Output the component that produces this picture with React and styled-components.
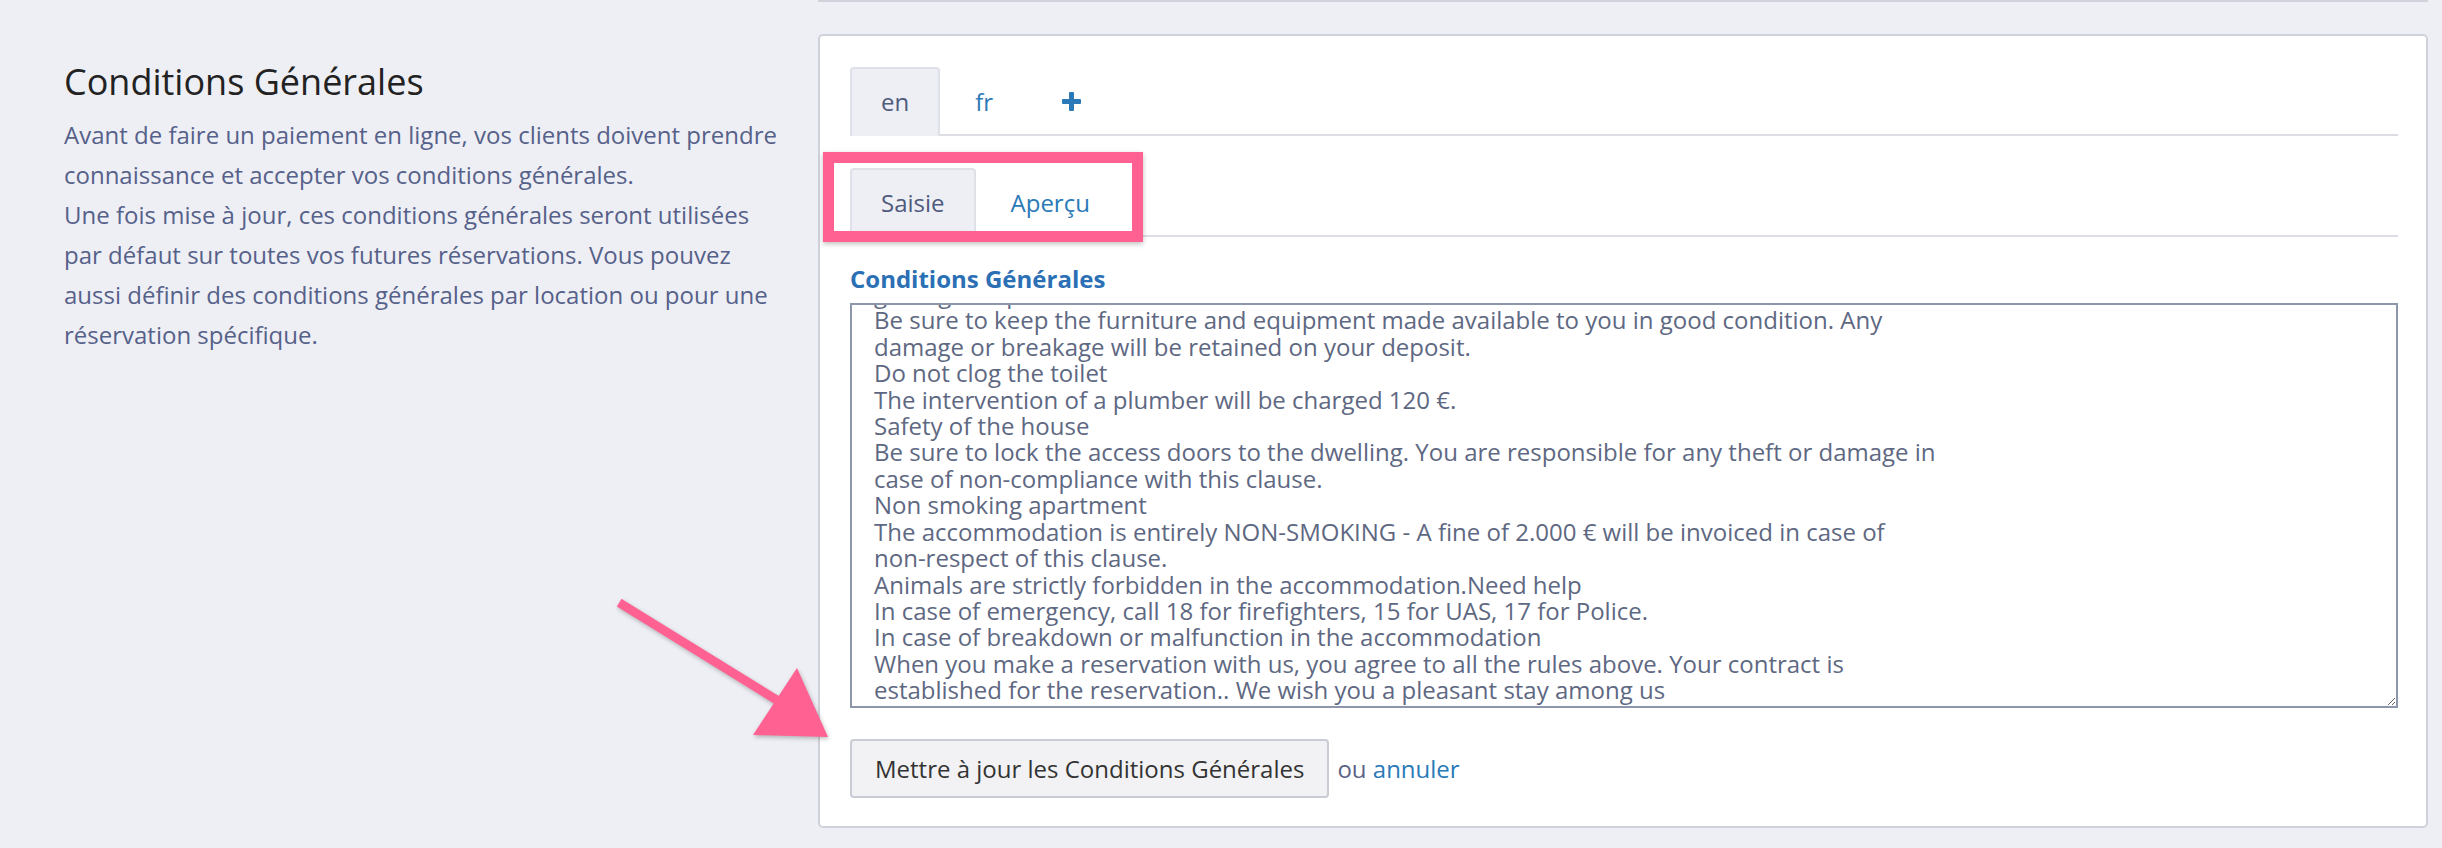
import React, { useEffect, useRef } from 'react';
import styled, { createGlobalStyle } from 'styled-components';

const GlobalStyle = createGlobalStyle`
  html, body {
    margin: 0;
    padding: 0;
    background: #eeeff4;
    font-family: "Open Sans", "Liberation Sans", sans-serif;
  }
`;

const Page = styled.div`
  position: relative;
  min-height: 848px;
  overflow: hidden;
`;

const PrevCard = styled.div`
  margin-left: 818px;
  width: 1610px;
  height: 0;
  box-sizing: border-box;
  border: 2px solid #cfd2da;
  border-top: none;
  border-radius: 0 0 5px 5px;
`;

const Row = styled.div`
  display: grid;
  grid-template-columns: 754px 1610px;
  padding-left: 64px;
  margin-top: 32px;
`;

const Intro = styled.div`
  padding-top: 26px;
`;

const Heading = styled.h2`
  margin: 0;
  font-size: 36px;
  line-height: 43px;
  font-weight: 400;
  color: #222;
`;

const Lead = styled.p`
  margin: 12px 0 0;
  width: 720px;
  font-size: 24px;
  line-height: 40px;
  color: #56618a;
`;

const Card = styled.div`
  position: relative;
  box-sizing: border-box;
  height: 794px;
  background: #fff;
  border: 2px solid #cfd2da;
  border-radius: 5px;
  padding: 31px 28px 0 30px;
`;

const TabBar = styled.div`
  display: flex;
  height: 67px;
  border-bottom: 2px solid #dcdee3;
  margin-top: ${(p) => p.$gap || 0}px;
`;

const Tab = styled.div`
  display: flex;
  align-items: center;
  justify-content: center;
  box-sizing: border-box;
  padding: 0 ${(p) => p.$pad || 29}px 3px;
  margin-right: 4px;
  margin-bottom: -2px;
  font-size: 24px;
  color: ${(p) => (p.$active ? '#4f5a7d' : '#2a7ab8')};
  background: ${(p) => (p.$active ? '#eeeff4' : 'transparent')};
  border: 2px solid ${(p) => (p.$active ? '#dfe1e8' : 'transparent')};
  border-bottom: none;
  border-radius: 4px 4px 0 0;
`;

const Highlight = styled.div`
  position: absolute;
  left: 3px;
  top: 116px;
  width: 320px;
  height: 90px;
  box-sizing: border-box;
  border: 11px solid #ff6192;
  box-shadow: 0 2px 5px rgba(0, 0, 0, 0.25);
  pointer-events: none;
`;

const Label = styled.label`
  display: block;
  margin-top: 29px;
  font-size: 24px;
  line-height: 26px;
  font-weight: 700;
  color: #2b70b5;
`;

const Editor = styled.textarea`
  display: block;
  margin-top: 11px;
  width: 100%;
  height: 405px;
  box-sizing: border-box;
  padding: 6px 20px 1px 22px;
  border: 2px solid #8d96aa;
  border-radius: 0;
  font-family: "Open Sans", "Liberation Sans", sans-serif;
  font-size: 24px;
  line-height: 26.4px;
  color: #5e6882;
  background: #fff;
  overflow: hidden;
  outline: none;
`;

const Actions = styled.div`
  display: flex;
  align-items: center;
  gap: 8px;
  margin-top: 31px;
  font-size: 24px;
  color: #5a6385;
`;

const Button = styled.button`
  height: 59px;
  padding: 0 23px;
  font-family: "Open Sans", "Liberation Sans", sans-serif;
  font-size: 24px;
  color: #333;
  background: #f2f2f4;
  border: 2px solid #c9ccd4;
  border-radius: 4px;
`;

const Link = styled.a`
  color: #2a7ab8;
  text-decoration: none;
`;

const Arrow = styled.svg`
  position: absolute;
  left: 600px;
  top: 590px;
  filter: drop-shadow(1px 2px 2px rgba(0, 0, 0, 0.25));
`;

const PlusIcon = () => (
  <svg width="19" height="19" viewBox="0 0 19 19">
    <rect x="7" y="0" width="5" height="19" rx="1" fill="#2a7ab8" />
    <rect x="0" y="7" width="19" height="5" rx="1" fill="#2a7ab8" />
  </svg>
);

const terms = `House rules
Arrival and departure
Arrival is from 4 pm and departure before 11 am. Please let us know your arrival time.
Respect for the neighborhood
Please respect the tranquility of the neighbors, especially between 10 pm and 8 am. Do not leave
garbage on public roads.
Be sure to keep the furniture and equipment made available to you in good condition. Any
damage or breakage will be retained on your deposit.
Do not clog the toilet
The intervention of a plumber will be charged 120 €.
Safety of the house
Be sure to lock the access doors to the dwelling. You are responsible for any theft or damage in
case of non-compliance with this clause.
Non smoking apartment
The accommodation is entirely NON-SMOKING - A fine of 2.000 € will be invoiced in case of
non-respect of this clause.
Animals are strictly forbidden in the accommodation.Need help
In case of emergency, call 18 for firefighters, 15 for UAS, 17 for Police.
In case of breakdown or malfunction in the accommodation
When you make a reservation with us, you agree to all the rules above. Your contract is
established for the reservation.. We wish you a pleasant stay among us`;

const App = () => {
  const editorRef = useRef(null);

  useEffect(() => {
    const el = editorRef.current;
    if (el) el.scrollTop = el.scrollHeight;
  }, []);

  return (
    <Page>
      <GlobalStyle />
      <PrevCard />
      <Row>
        <Intro>
          <Heading>Conditions Générales</Heading>
          <Lead>
            Avant de faire un paiement en ligne, vos clients doivent prendre connaissance et accepter vos conditions générales.
            <br />
            Une fois mise à jour, ces conditions générales seront utilisées par défaut sur toutes vos futures réservations. Vous pouvez aussi définir des conditions générales par location ou pour une réservation spécifique.
          </Lead>
        </Intro>
        <Card>
          <TabBar>
            <Tab $active>en</Tab>
            <Tab>fr</Tab>
            <Tab $pad={32}><PlusIcon /></Tab>
          </TabBar>
          <TabBar $gap={32}>
            <Tab $active>Saisie</Tab>
            <Tab>Aperçu</Tab>
          </TabBar>
          <Highlight />
          <Label>Conditions Générales</Label>
          <Editor ref={editorRef} defaultValue={terms} />
          <Actions>
            <Button>Mettre à jour les Conditions Générales</Button>
            <span>ou <Link href="#">annuler</Link></span>
          </Actions>
        </Card>
      </Row>
      <Arrow width="240" height="160" viewBox="600 590 240 160">
        <line x1="623" y1="605" x2="780" y2="702" stroke="#ff6192" strokeWidth="9" strokeLinecap="square" />
        <polygon points="797,668 753,735 828,737" fill="#ff6192" />
      </Arrow>
    </Page>
  );
};

export default App;
